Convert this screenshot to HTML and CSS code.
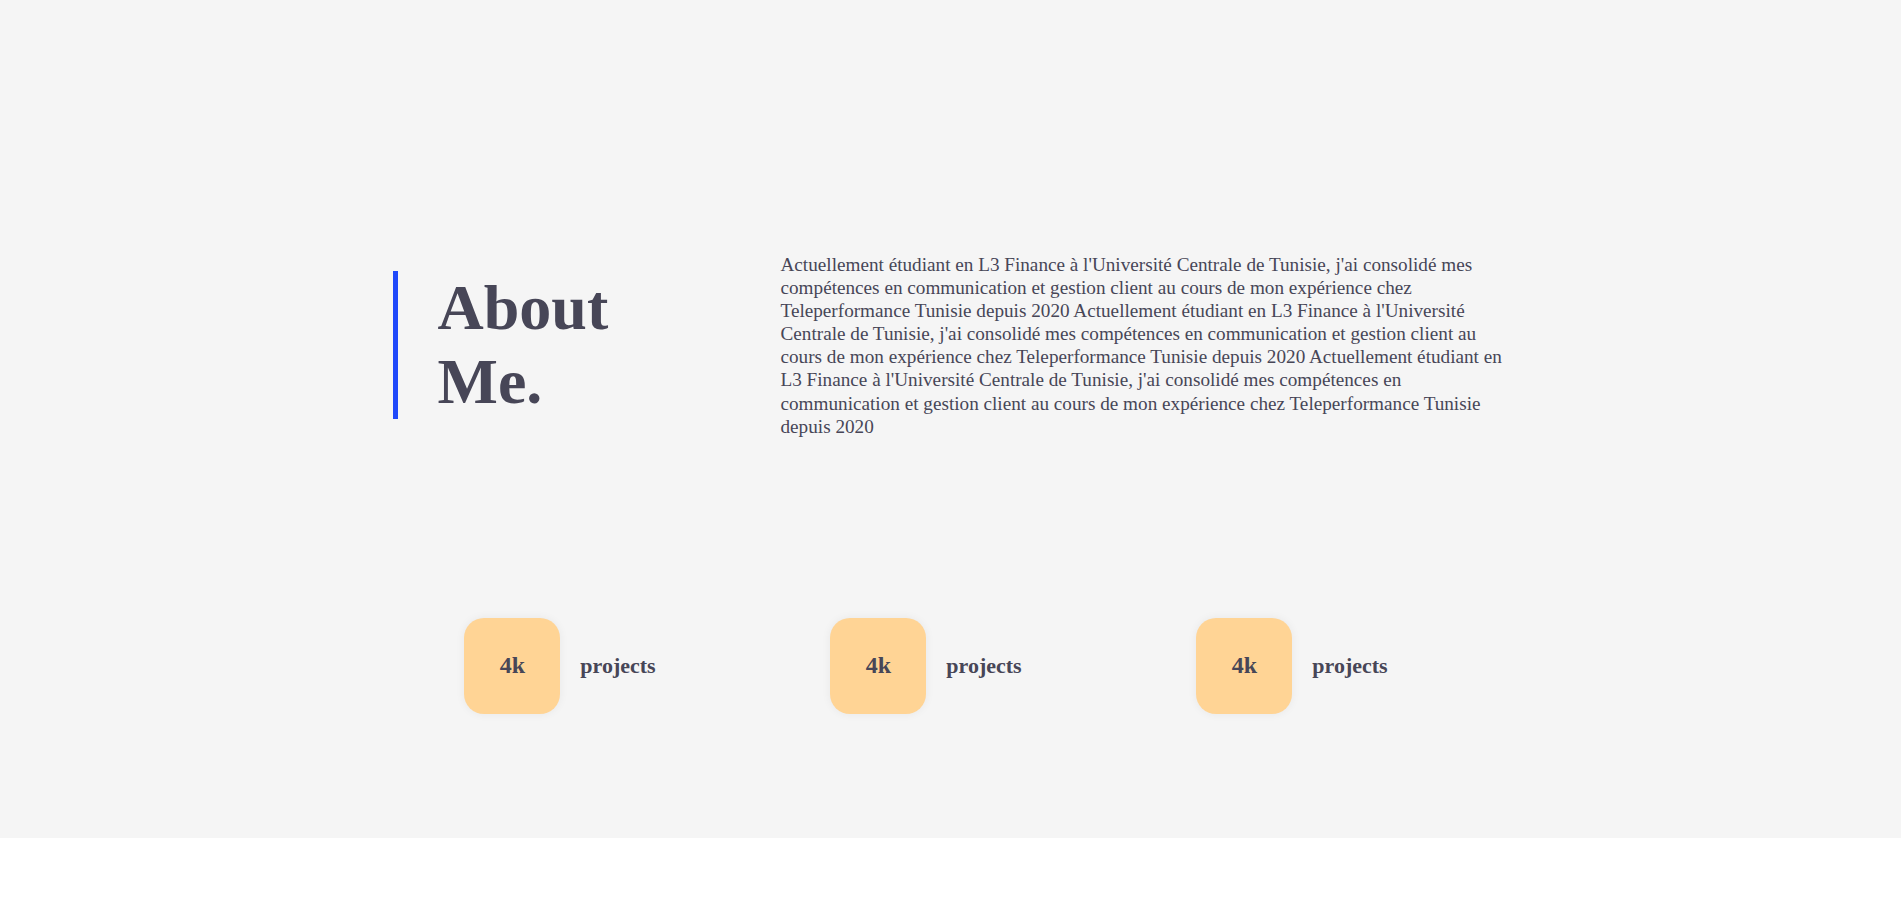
FILE: index.html
```html
<!DOCTYPE html>
<html lang="fr">
<head>
<meta charset="utf-8">
<title>About Me</title>
<link rel="stylesheet" href="styles.css">
</head>
<body>
<section class="about">
  <div class="container">
    <div class="about-row">
      <div class="about-title">
        <h2 class="heading">About<br>Me.</h2>
      </div>
      <p class="about-text">Actuellement étudiant en L3 Finance à l'Université Centrale de Tunisie, j'ai consolidé mes compétences en communication et gestion client au cours de mon expérience chez Teleperformance Tunisie depuis 2020 Actuellement étudiant en L3 Finance à l'Université Centrale de Tunisie, j'ai consolidé mes compétences en communication et gestion client au cours de mon expérience chez Teleperformance Tunisie depuis 2020 Actuellement étudiant en L3 Finance à l'Université Centrale de Tunisie, j'ai consolidé mes compétences en communication et gestion client au cours de mon expérience chez Teleperformance Tunisie depuis 2020</p>
    </div>
    <div class="stats">
      <div class="stat">
        <div class="stat-box">4k</div>
        <span class="stat-label">projects</span>
      </div>
      <div class="stat">
        <div class="stat-box">4k</div>
        <span class="stat-label">projects</span>
      </div>
      <div class="stat">
        <div class="stat-box">4k</div>
        <span class="stat-label">projects</span>
      </div>
    </div>
  </div>
</section>
</body>
</html>
```
FILE: styles.css
```css
* { box-sizing: border-box; }
html, body { margin: 0; padding: 0; background: #ffffff; }
body {
  font-family: "Liberation Serif", "Times New Roman", serif;
  color: #474657;
}
.about {
  background: #f5f5f5;
  height: 838px;
  padding-top: 253px;
}
.container {
  width: 1140px;
  margin: 0 auto;
  padding: 0 12px;
}
.about-row {
  display: grid;
  grid-template-columns: 388px 728px;
  align-items: center;
}
.about-title {
  border-left: 5px solid #1f48fa;
  padding-left: 40px;
}
.heading {
  margin: 0;
  font-size: 64px;
  font-weight: 700;
  line-height: 74px;
  color: #474657;
}
.about-text {
  margin: 0;
  font-size: 19.2px;
  line-height: 23.1px;
  color: #474657;
}
.stats {
  margin-top: 180px;
  margin-left: -15.5px;
  width: 1098px;
  display: flex;
  justify-content: space-around;
  align-items: center;
}
.stat {
  display: flex;
  align-items: center;
  gap: 20px;
}
.stat-box {
  width: 96px;
  height: 96px;
  border-radius: 20px;
  background: #ffd495;
  box-shadow: 0 0 10px rgba(0, 0, 0, 0.06);
  display: flex;
  align-items: center;
  justify-content: center;
  font-size: 24px;
  font-weight: 700;
  color: #474657;
}
.stat-label {
  font-size: 22px;
  font-weight: 700;
  color: #474657;
}
```
